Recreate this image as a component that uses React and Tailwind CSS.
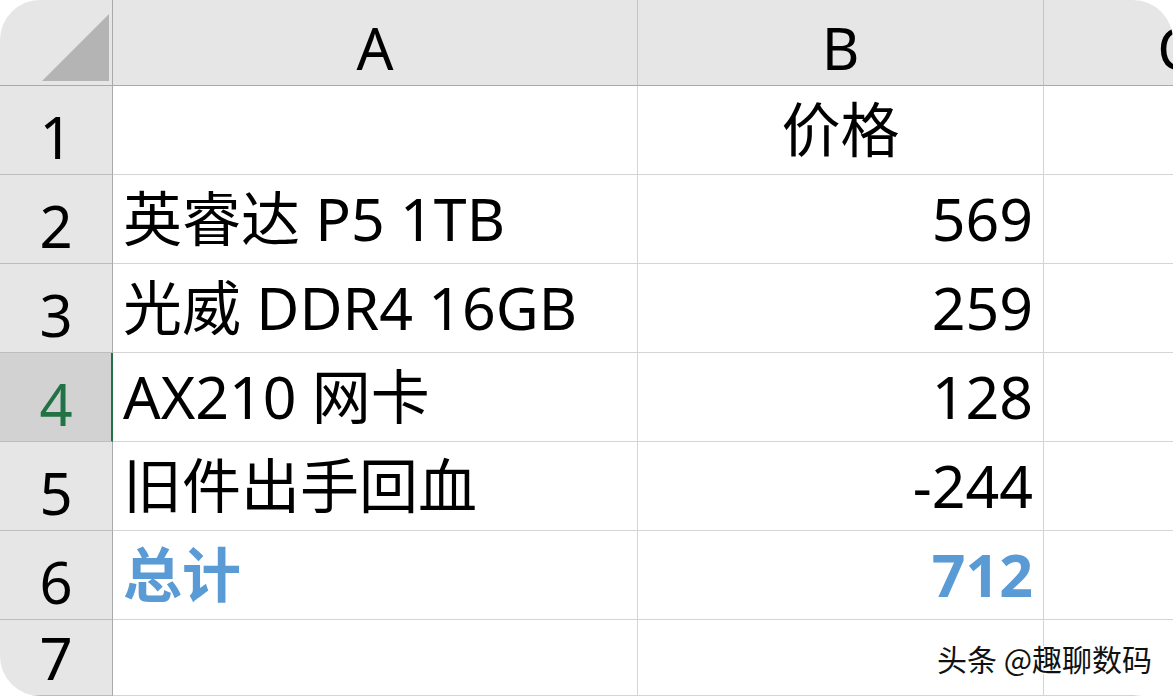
const rows = [
  { n: 1, a: '', b: '价格', bAlign: 'center' },
  { n: 2, a: '英睿达 P5 1TB', b: '569' },
  { n: 3, a: '光威 DDR4 16GB', b: '259' },
  { n: 4, a: 'AX210 网卡', b: '128', selected: true },
  { n: 5, a: '旧件出手回血', b: '-244' },
  { n: 6, a: '总计', b: '712', total: true },
  { n: 7, a: '', b: '' },
];

const font = { fontFamily: '"Noto Sans", "Noto Sans CJK SC", sans-serif' };

const App = () => {
  return (
    <div className="w-[1173px] h-[696px] bg-white overflow-hidden" style={font}>
      <div className="relative w-[1173px] h-[696px] rounded-[40px] overflow-hidden bg-white">
        <div className="grid grid-cols-[113px_525px_406px_264px] grid-rows-[86px_repeat(6,89px)_76px]">
          {/* header row */}
          <div className="bg-[#e6e6e6] border-r border-b border-r-[#a9a9a9] border-b-[#a9a9a9] relative">
            <svg className="absolute left-[42px] top-[14px]" width="67" height="67" viewBox="0 0 67 67">
              <polygon points="0,67 67,67 67,0" fill="#b4b4b4" />
            </svg>
          </div>
          {['A', 'B', 'C'].map((c) => (
            <div
              key={c}
              className="bg-[#e6e6e6] border-r border-b border-r-[#c4c4c4] border-b-[#a9a9a9] flex items-end justify-center pb-[8px] text-[58px] leading-none text-black"
            >
              {c}
            </div>
          ))}

          {rows.map((r) => (
            <div key={r.n} className="contents">
              <div
                className={
                  r.selected
                    ? 'bg-[#d2d2d2] border-r-2 border-r-[#217346] border-b border-b-[#bdbdbd] flex items-end justify-center pb-[8px] pl-[1px] text-[58px] leading-none text-[#217346]'
                    : 'bg-[#e6e6e6] border-r border-r-[#a9a9a9] border-b border-b-[#bdbdbd] flex items-end justify-center pb-[8px] text-[58px] leading-none text-black'
                }
              >
                {r.n}
              </div>
              <div
                className={
                  r.total
                    ? 'border-r border-b border-[#d4d4d4] flex items-end pl-[10px] pb-[15px] text-[59px] leading-none font-bold text-[#5b9bd5] whitespace-nowrap'
                    : 'border-r border-b border-[#d4d4d4] flex items-end pl-[10px] pb-[15px] text-[59px] leading-none text-black whitespace-nowrap'
                }
              >
                {r.a}
              </div>
              <div
                className={
                  r.bAlign === 'center'
                    ? 'border-r border-b border-[#d4d4d4] flex items-end justify-center pb-[15px] text-[59px] leading-none text-black'
                    : r.total
                    ? 'border-r border-b border-[#d4d4d4] flex items-end justify-end pr-[10px] pb-[15px] text-[59px] leading-none font-bold text-[#5b9bd5]'
                    : 'border-r border-b border-[#d4d4d4] flex items-end justify-end pr-[10px] pb-[15px] text-[59px] leading-none text-black'
                }
              >
                {r.b}
              </div>
              <div className="border-r border-b border-[#d4d4d4]" />
            </div>
          ))}
        </div>

        <div
          className="absolute left-[937px] top-[643px] text-[30px] leading-none text-[#111] whitespace-nowrap"
          style={{ fontFamily: '"Noto Sans CJK SC", sans-serif', textShadow: '2px 2px 0 #fff, -1px -1px 0 #fff' }}
        >
          头条 @趣聊数码
        </div>
      </div>
    </div>
  );
};

export default App;
